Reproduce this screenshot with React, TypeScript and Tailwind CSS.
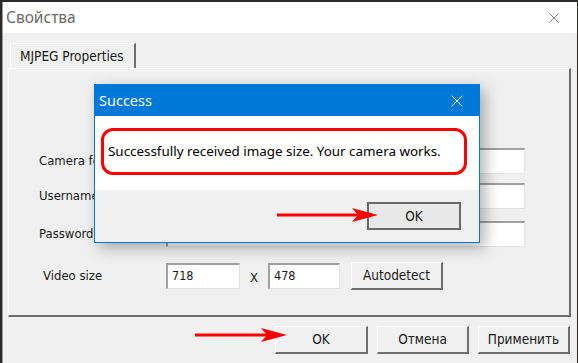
import { X } from 'lucide-react'

const tahoma = { fontFamily: '"DejaVu Sans Condensed", "DejaVu Sans", sans-serif' }
const segoe = { fontFamily: '"Noto Sans", "Open Sans", sans-serif' }

function Arrow({ width }: { width: number }) {
  return (
    <svg width={width} height={16} viewBox={`0 0 ${width} 16`}>
      <line x1={0} y1={8} x2={width - 20} y2={8} stroke="#f00" strokeWidth={3} />
      <path d={`M${width - 26} 1 L${width} 8 L${width - 26} 15 L${width - 20} 8 Z`} fill="#f00" />
    </svg>
  )
}

function Field({ className = '', value = '' }: { className?: string; value?: string }) {
  return (
    <div
      className={`h-[26px] bg-white border-t-2 border-l-2 border-[#a0a0a0] border-r border-b border-r-[#e3e3e3] border-b-[#e3e3e3] flex items-center px-[4px] text-[12.5px] text-[#1a1a1a] ${className}`}
    >
      {value}
    </div>
  )
}

function Btn({ label, className = '' }: { label: string; className?: string }) {
  return (
    <button
      className={`h-[28px] bg-[#f0f0f0] border border-t-white border-l-white border-r-2 border-b-2 border-r-[#6e6e6e] border-b-[#6e6e6e] text-[13.5px] text-[#1a1a1a] flex items-center justify-center ${className}`}
    >
      {label}
    </button>
  )
}

export default function App() {
  return (
    <div className="relative w-[578px] h-[363px] overflow-hidden bg-[#2c2a28] pt-[2px] pl-[2px]" style={tahoma}>
      <div className="w-[575px] h-[361px] bg-[#f0f0f0] border-l border-[#9a9a9a] flex flex-col">
        {/* title bar */}
        <div className="h-[31px] bg-white flex items-center justify-between pl-[3px] pr-[14px]">
          <span className="text-[15.5px] text-[#6a6a6a]" style={segoe}>
            Свойства
          </span>
          <X size={18} strokeWidth={1} className="text-[#5a5a5a]" />
        </div>

        {/* tab header */}
        <div className="mt-[10px] pl-[7px] flex">
          <div className="w-[126px] h-[25px] bg-[#f0f0f0] border-t border-l border-white border-r-2 border-r-[#6e6e6e] flex items-center pl-[9px] text-[13.5px] text-[#1a1a1a] whitespace-nowrap">
            MJPEG Properties
          </div>
        </div>

        {/* tab page - first rows sit under the dialog */}
        <div className="ml-[5px] w-[563px] h-[249px] border-t border-l border-white border-r-2 border-b-2 border-r-[#6e6e6e] border-b-[#6e6e6e] flex flex-col pl-[30px] pt-[79px] text-[13px] text-[#1a1a1a]">
          <div className="flex items-center">
            <span className="w-[127px] whitespace-nowrap">Camera feed URL</span>
            <Field className="w-[359px]" />
          </div>
          <div className="flex items-center mt-[9px]">
            <span className="w-[127px]">Username</span>
            <Field className="w-[359px]" />
          </div>
          <div className="flex items-center mt-[12px]">
            <span className="w-[127px]">Password</span>
            <Field className="w-[359px]" />
          </div>
          <div className="flex items-center mt-[15px] pl-[4px]">
            <span className="w-[123px]">Video size</span>
            <Field className="w-[74px]" value="718" />
            <span className="w-[28px] text-center pt-[4px]">X</span>
            <Field className="w-[72px]" value="478" />
            <Btn label="Autodetect" className="ml-[11px] w-[92px] h-[28px]" />
          </div>
        </div>

        {/* bottom buttons */}
        <div className="mt-[9px] flex justify-end gap-[9px] pr-[7px]">
          <Btn label="OK" className="w-[93px]" />
          <Btn label="Отмена" className="w-[92px]" />
          <Btn label="Применить" className="w-[92px]" />
        </div>
      </div>

      {/* success dialog */}
      <div className="absolute left-[94px] top-[84px] w-[386px] h-[159px] border border-[#0078d7] bg-[#f0f0f0] shadow-[5px_5px_14px_rgba(0,0,0,0.3)] flex flex-col">
        <div className="h-[31px] bg-[#0078d7] flex items-center justify-between pl-[4px] pr-[12px]">
          <span className="text-[14.5px] text-white" style={segoe}>
            Success
          </span>
          <X size={20} strokeWidth={1.2} className="text-white" />
        </div>
        <div className="h-[74px] bg-white pl-[6px] pt-[12px]">
          <div
            className="w-[366px] h-[47px] border-[3px] border-[#f00] rounded-[12px] flex items-center pl-[4px] text-[13.4px] text-black whitespace-nowrap"
            style={segoe}
          >
            Successfully received image size. Your camera works.
          </div>
        </div>
        <div className="flex-1 flex justify-end pr-[18px] pt-[12px]">
          <button className="w-[94px] h-[28px] bg-[#e8e8e8] border-2 border-[#6a6a6a] text-[13.5px] text-[#1a1a1a] flex items-center justify-center">
            OK
          </button>
        </div>
      </div>

      {/* arrows */}
      <div className="absolute left-[277px] top-[207px]">
        <Arrow width={101} />
      </div>
      <div className="absolute left-[195px] top-[327px]">
        <Arrow width={92} />
      </div>
    </div>
  )
}
